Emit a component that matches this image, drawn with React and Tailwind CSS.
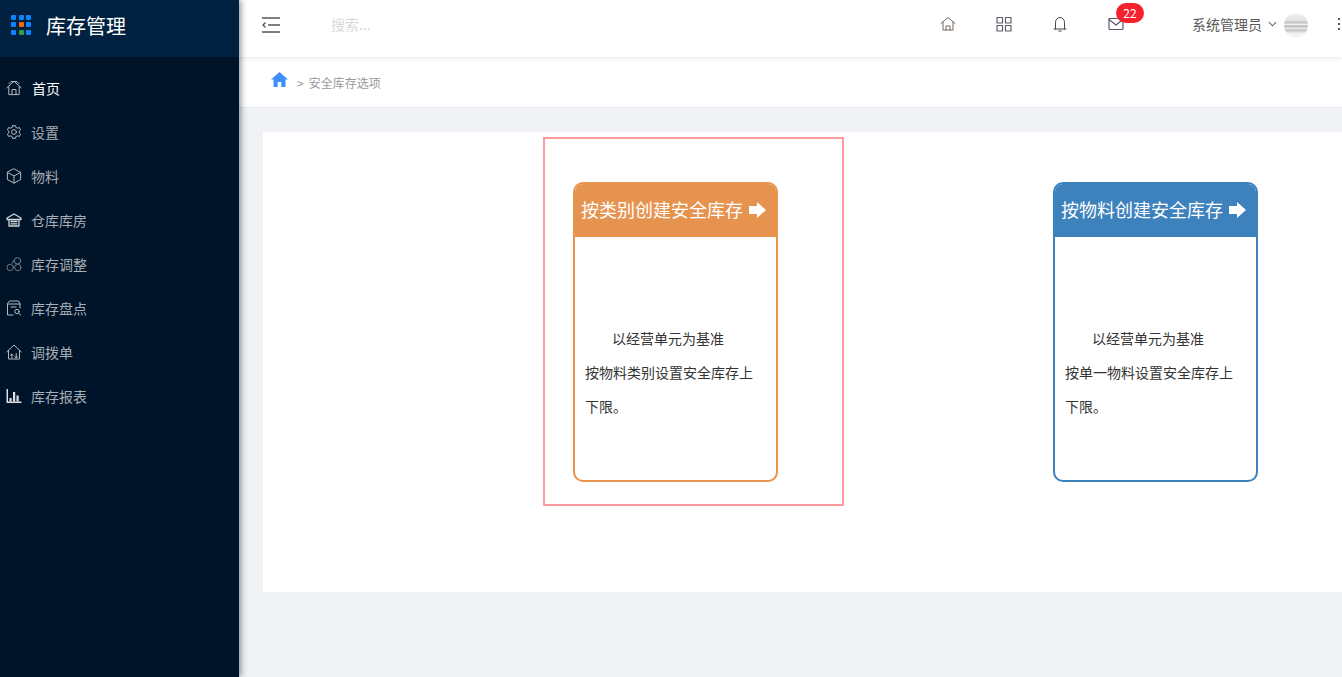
const navIcon = "w-[16px] h-[16px] shrink-0";

function I({ children, className = navIcon, vb = "0 0 16 16", stroke = "#b4bbc3", sw = 1 }) {
  return (
    <svg viewBox={vb} className={className} fill="none" stroke={stroke} strokeWidth={sw} strokeLinejoin="round" strokeLinecap="round">
      {children}
    </svg>
  );
}

const items = [
  { t: "首页", active: true, icon: <I><path d="M.8 7.800 8 1.200l7.200 6.600M2.800 6.600v8h10.400v-8M6 14.500v-5h4v5M3 3.600l2-2h6l2 2" /></I> },
  { t: "设置", icon: <I><path d="M6.600 1.600h2.800l.5 1.800 1.700.8 1.700-.7 1.300 2.400-1.400 1.200v1.800l1.400 1.200-1.300 2.400-1.700-.7-1.700.8-.5 1.800H6.600l-.5-1.800-1.700-.8-1.700.7-1.300-2.400 1.400-1.200V7.100L1.400 5.900l1.300-2.400 1.700.7 1.700-.8z" /><circle cx="8" cy="8" r="2.400" /></I> },
  { t: "物料", icon: <I><path d="M8 .9l6.600 3.500v7.200L8 15.100l-6.600-3.500V4.400zM1.400 4.400 8 8l6.600-3.600M8 8v7" /></I> },
  { t: "仓库库房", icon: <I sw={1.300} stroke="#d0d5da"><path d="M1 6l7-4 7 4v1.500H1zM3 7.500V14h10V7.500M5 9.500h6M5 11.800h6" /></I> },
  { t: "库存调整", icon: <I stroke="#6f7a86"><circle cx="4.200" cy="11.500" r="3.200" /><circle cx="11.800" cy="11.500" r="3.200" /><circle cx="11.500" cy="4.800" r="3.200" /><path d="M6 7.500 8 4" /></I> },
  { t: "库存盘点", icon: <I><path d="M7 15H1.500V3.500L3.500 1h9L14 3.500V8M1.500 4H14M5 7h5" /><circle cx="11" cy="11.500" r="2.200" /><path d="m12.800 13.300 2 1.800" /></I> },
  { t: "调拨单", icon: <I><path d="M.8 7.800 8 1l7.200 6.800M2.500 6.500V15h11V6.500M5.800 14v-4l-1.300 1.200M5.800 10 7 11.200M10.200 9.500V14M9 12.700l1.200 1.300 1.200-1.300" /></I> },
  { t: "库存报表", icon: <svg viewBox="0 0 16 16" className={navIcon} fill="#dde0e4"><path d="M.5 1h1.500v12.500H15.500V15H.5z" /><path d="M3.500 10h2.200v3.500H3.500zM7 4h2.200v9.500H7zM10.500 7.500h2.200v6h-2.200z" /></svg> },
];

function Card({ color, title, line }) {
  return (
    <div className="w-[205px] h-[300px] rounded-[10px] border-2 bg-white overflow-hidden shrink-0" style={{ borderColor: color }}>
      <div className="h-[53px] flex items-center pl-[6px] text-white text-[18px] whitespace-nowrap" style={{ backgroundColor: color }}>
        <span className="-mt-[2px]">{title}</span>
        <svg viewBox="0 0 17 16" className="w-[17px] h-[16px] ml-[6px] -mt-[2px]" fill="white"><path d="M0 4h8V0l9 8-9 8v-4H0z" /></svg>
      </div>
      <div className="px-[10px] pt-[84px] text-[14px] leading-[34px] text-[#333]">
        <p className="indent-[27px]">以经营单元为基准</p>
        <p>{line}</p>
      </div>
    </div>
  );
}

export default function App() {
  return (
    <div className="h-[677px] w-[1342px] flex overflow-hidden bg-[#f0f2f5] font-['Noto_Sans_CJK_SC','Noto_Sans',sans-serif]">
      <aside className="w-[239px] shrink-0 bg-[#001429] flex flex-col shadow-[2px_0_6px_rgba(0,21,41,0.45)] z-20">
        <div className="h-[57px] bg-[#002140] flex items-center pl-[11px]">
          <div className="grid grid-cols-3 gap-[2.500px] w-[20px] -mt-[8px] mr-[15px]">
            {["#0a84ff","#0a84ff","#0a84ff","#0a84ff","#f2680f","#0a84ff","#0a84ff","#25a244","#0a84ff"].map((c, i) => (
              <span key={i} className="w-[5px] h-[5px] rounded-[1px]" style={{ backgroundColor: c }} />
            ))}
          </div>
          <span className="text-white text-[20px] -mt-[6px]">库存管理</span>
        </div>
        <nav className="pt-[9px]">
          {items.map((it) => (
            <div key={it.t} className="h-[44px] flex items-center pl-[6px] gap-[9px]">
              {it.icon}
              <span className={`text-[14px] ${it.active ? "text-white ml-[1px]" : "text-[#a6adb4]"}`}>{it.t}</span>
            </div>
          ))}
        </nav>
      </aside>
      <div className="flex-1 min-w-0 flex flex-col">
        <header className="h-[57px] bg-white flex items-center shadow-[0_1px_4px_rgba(0,21,41,0.1)] z-10 relative">
          <svg viewBox="0 0 18 16" className="w-[18px] h-[16px] ml-[23px] -mt-[8px]" fill="none" stroke="#555" strokeWidth="1.300"><path d="M0 1h18M6 8h12M0 15h18M3.500 5.500 1 8l2.500 2.500" /></svg>
          <span className="ml-[51px] mb-[8px] text-[14px] text-[#d9d9d9]">搜索...</span>
          <div className="ml-auto flex items-center mb-[9px]">
            <I className="w-[16px] h-[16px]" stroke="#76695c" vb="0 0 16 16"><path d="M1 7.500l7-6 7 6M3 6v8h10V6M6 14v-4h4v4" /></I>
            <I className="w-[16px] h-[16px] ml-[40px]" stroke="#5f5a66" sw={1.200}><rect x="1" y="1.500" width="5.500" height="5.500" /><rect x="9.500" y="1.500" width="5.500" height="5.500" /><rect x="1" y="9.500" width="5.500" height="5.500" /><rect x="9.500" y="9.500" width="5.500" height="5.500" /></I>
            <I className="w-[16px] h-[16px] ml-[40px]" stroke="#444"><path d="M3.500 13V6.500c0-3 2-5 4.500-5s4.500 2 4.500 5V13M2 13h12M6.800 15h2.400" /></I>
            <div className="relative ml-[40px]">
              <I className="w-[16px] h-[16px] block" stroke="#5b5670" sw={1.200}><rect x="1" y="2.500" width="14" height="11" rx="1" /><path d="m1 3.500 7 5.500 7-5.500" /></I>
              <span className="absolute -top-[13px] left-[8px] h-[20px] w-[28px] rounded-full bg-[#f5222d] text-white text-[12px] leading-[20px] text-center">22</span>
            </div>
            <span className="ml-[68px] mt-[1px] text-[14px] text-[#595959]">系统管理员</span>
            <svg viewBox="0 0 10 6" className="w-[9px] h-[6px] ml-[6px]" fill="none" stroke="#666" strokeWidth="1.200"><path d="m1 1 4 4 4-4" /></svg>
            <div className="w-[24px] h-[24px] rounded-full ml-[7px] mt-[1px] shrink-0 bg-[linear-gradient(180deg,#f2f2f2_0%,#e4e4e4_30%,#c4c4c4_40%,#f0f0f0_48%,#b0b0b0_55%,#ececec_62%,#c4c4c4_72%,#f2f2f2_85%,#f4f4f4_100%)]" />
            <div className="ml-[30px] w-[2px] flex flex-col gap-[3px] mr-[2px]">
              <span className="w-[2px] h-[2px] bg-[#555]" /><span className="w-[2px] h-[2px] bg-[#555]" /><span className="w-[2px] h-[2px] bg-[#555]" />
            </div>
          </div>
        </header>
        <div className="h-[51px] bg-white border-b border-[#e8e8e8] flex items-center pl-[32px]">
          <svg viewBox="0 0 17 15" className="w-[17px] h-[15px] -mt-[5px]" fill="#3f8ffb"><path d="M8.500 0 17 7.500h-2.500V15h-4.200v-5H6.700v5H2.500V7.500H0z" /></svg>
          <span className="ml-[9px] mt-[2px] text-[12px] text-[#999]">&gt;</span>
          <span className="ml-[5px] mt-[2px] text-[12px] text-[#999]">安全库存选项</span>
        </div>
        <main className="pl-[24px] pt-[24px] overflow-hidden">
          <div className="relative h-[460px] bg-white flex pl-[310px] pt-[50px] gap-[275px] w-[1079px]">
            <div className="absolute left-[280px] top-[5px] w-[301px] h-[369px] border-2 border-[#ff9a9e] pointer-events-none" />
            <Card color="#e79350" title="按类别创建安全库存" line={<>按物料类别设置安全库存上<br />下限。</>} />
            <Card color="#3e82bd" title="按物料创建安全库存" line={<>按单一物料设置安全库存上<br />下限。</>} />
          </div>
        </main>
      </div>
    </div>
  );
}
